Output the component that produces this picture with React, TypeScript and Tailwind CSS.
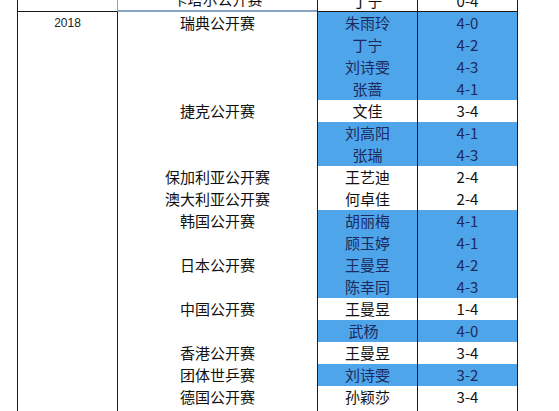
import React from "react";

type Row = { t?: string; p: string; s: string; blue: boolean; shift?: boolean };

const rows: Row[] = [
  { t: "瑞典公开赛", p: "朱雨玲", s: "4-0", blue: true },
  { p: "丁宁", s: "4-2", blue: true },
  { p: "刘诗雯", s: "4-3", blue: true },
  { p: "张蔷", s: "4-1", blue: true },
  { t: "捷克公开赛", p: "文佳", s: "3-4", blue: false },
  { p: "刘高阳", s: "4-1", blue: true },
  { p: "张瑞", s: "4-3", blue: true },
  { t: "保加利亚公开赛", p: "王艺迪", s: "2-4", blue: false },
  { t: "澳大利亚公开赛", p: "何卓佳", s: "2-4", blue: false },
  { t: "韩国公开赛", p: "胡丽梅", s: "4-1", blue: true },
  { p: "顾玉婷", s: "4-1", blue: true },
  { t: "日本公开赛", p: "王曼昱", s: "4-2", blue: true },
  { p: "陈幸同", s: "4-3", blue: true },
  { t: "中国公开赛", p: "王曼昱", s: "1-4", blue: false },
  { p: "武杨", s: "4-0", blue: true, shift: true },
  { t: "香港公开赛", p: "王曼昱", s: "3-4", blue: false },
  { t: "团体世乒赛", p: "刘诗雯", s: "3-2", blue: true },
  { t: "德国公开赛", p: "孙颖莎", s: "3-4", blue: false },
  { p: "", s: "", blue: false },
];

const cjk = { fontFamily: '"Noto Sans CJK SC", "Noto Sans", sans-serif' };

export default function App() {
  return (
    <div className="w-[559px] h-[411px] bg-white overflow-hidden" style={cjk}>
      <div className="-mt-[10px] flex flex-row text-[15px] leading-[22px]">
        <div className="w-[17px] shrink-0" />
        {/* Year column */}
        <div className="w-[101px] shrink-0 flex flex-col border-l border-[#1a1a1a]">
          <div className="h-[22px] border-b border-[#1a1a1a] border-r border-r-[#8aa4c8]" />
          <div className="flex-1 border-r border-[#1a1a1a]">
            <div
              className="h-[22px] flex items-center justify-center text-[12px] text-[#222]"
              style={{ fontFamily: '"Liberation Sans", Arial, sans-serif' }}
            >
              2018
            </div>
          </div>
        </div>
        {/* Tournament column */}
        <div className="w-[200px] shrink-0 flex flex-col border-r border-[#1a1a1a]">
          <div className="h-[22px] border-b-2 border-[#8aa4c8] flex items-center justify-center text-[#111]">
            <span className="-mt-[2px]">卡塔尔公开赛</span>
          </div>
          {rows.map((r, i) => (
            <div key={i} className="h-[22px] flex items-center justify-center text-[#111] whitespace-nowrap">
              {r.t ?? ""}
            </div>
          ))}
        </div>
        {/* Player column */}
        <div className="w-[100px] shrink-0 flex flex-col border-r border-[#1a1a1a]">
          <div className="h-[22px] border-b border-[#1a1a1a] flex items-center justify-center text-[#111]">
            丁宁
          </div>
          {rows.map((r, i) => (
            <div
              key={i}
              className={
                r.blue
                  ? "h-[22px] flex items-center justify-center bg-[#4fa5ea] text-[#1c2a5e]"
                  : "h-[22px] flex items-center justify-center bg-white text-[#111]"
              }
            >
              <span className={r.shift ? "mr-[8px]" : ""}>{r.p}</span>
            </div>
          ))}
        </div>
        {/* Score column */}
        <div className="w-[100px] shrink-0 flex flex-col border-r border-[#1a1a1a]">
          <div className="h-[22px] border-b border-[#1a1a1a] flex items-center justify-center text-[#111]">
            0-4
          </div>
          {rows.map((r, i) => (
            <div
              key={i}
              className={
                r.blue
                  ? "h-[22px] flex items-center justify-center bg-[#4fa5ea] text-[#1c2a5e]"
                  : "h-[22px] flex items-center justify-center bg-white text-[#111]"
              }
            >
              {r.s}
            </div>
          ))}
        </div>
        <div className="flex-1" />
      </div>
    </div>
  );
}
